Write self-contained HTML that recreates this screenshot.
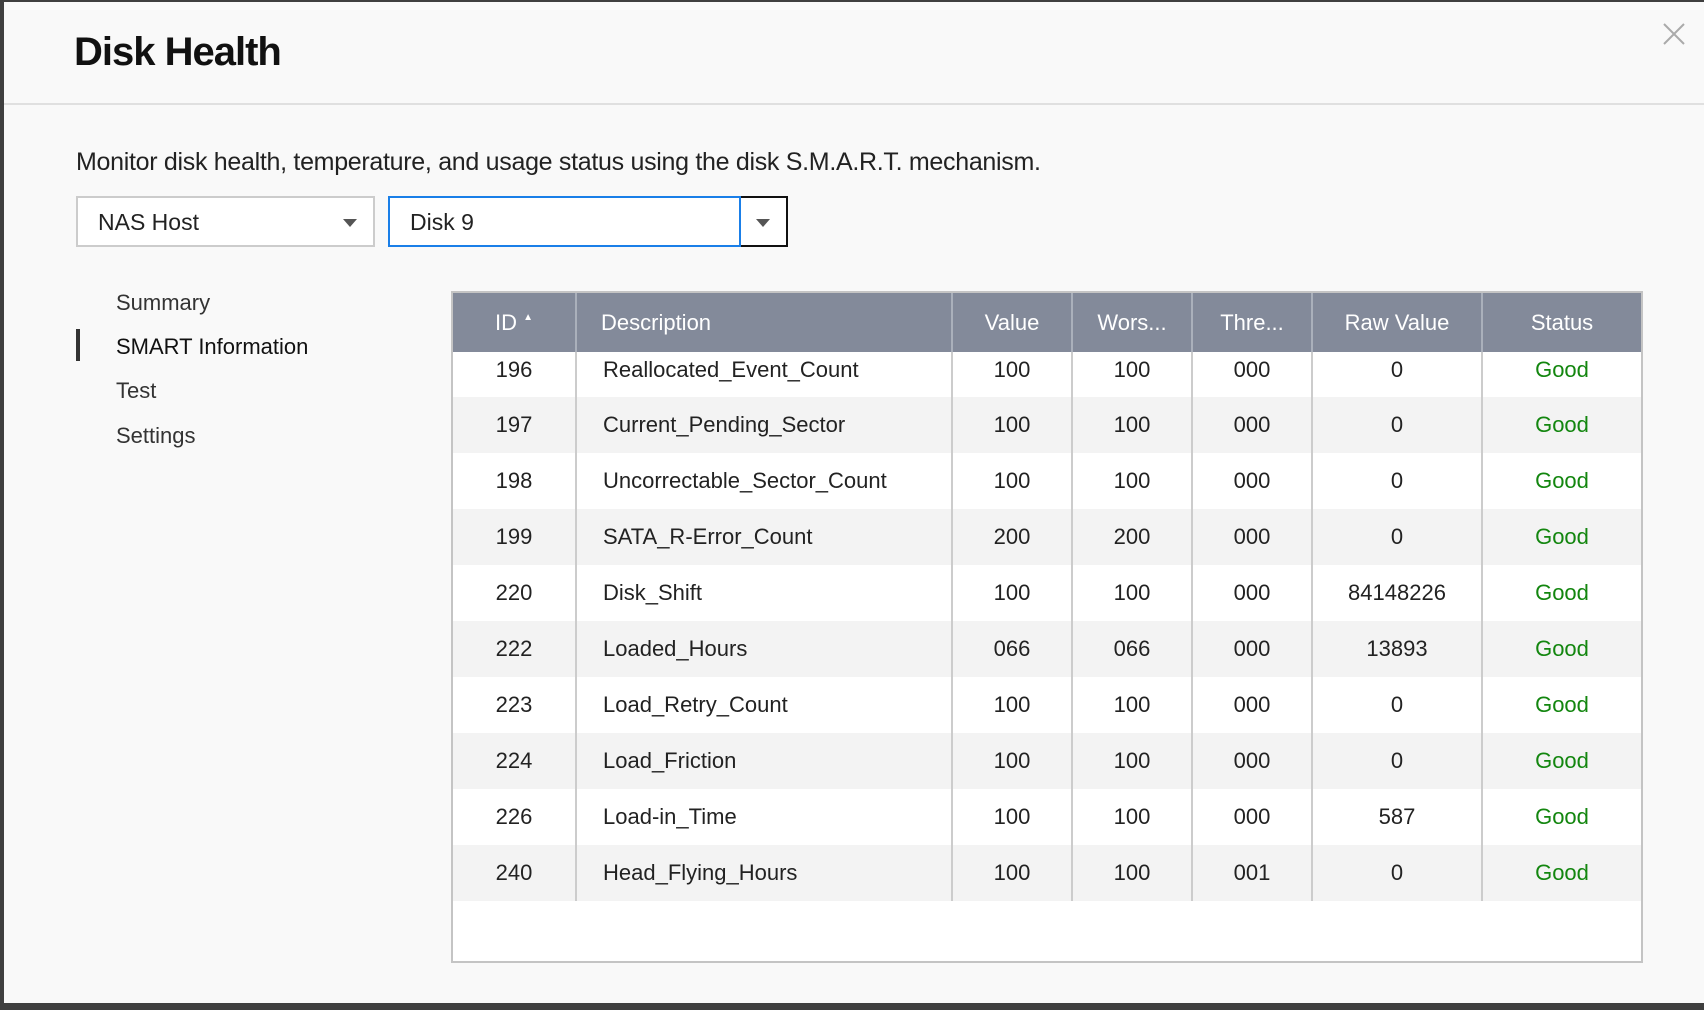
<!DOCTYPE html>
<html><head><meta charset="utf-8"><style>
*{box-sizing:border-box;margin:0;padding:0}
body{width:1704px;height:1010px;background:#3f3f3f;position:relative;overflow:hidden;font-family:"Liberation Sans",sans-serif;color:#222}
.dlg{position:absolute;left:4px;top:2px;width:1700px;height:1001px;background:#f9f9f9}
.title{position:absolute;left:70px;top:28px;font-size:40px;font-weight:bold;color:#111;letter-spacing:-1px}
.hr{position:absolute;left:0;right:0;top:101px;height:2px;background:#e0e0e0}
.x{position:absolute;left:1658px;top:20px;width:24px;height:24px}
.desc{position:absolute;left:72px;top:146px;font-size:25px;color:#222;letter-spacing:-0.3px}
.sel{position:absolute;top:194px;height:51px;background:#fff;font-size:23px;line-height:49px;padding-left:20px}
.s1{left:72px;width:299px;border:2px solid #ccc}
.s2{left:384px;width:353px;border:2px solid #1a7fe8}
.s3{left:737px;top:194px;width:47px;border:2px solid #111;border-left:none}
.tri{position:absolute;width:0;height:0;border-left:7px solid transparent;border-right:7px solid transparent;border-top:8px solid #555}
.nav{position:absolute;left:112px;font-size:22px;color:#333}
.bar{position:absolute;left:72px;top:327px;width:4px;height:32px;background:#333}
.tbl{position:absolute;left:447px;top:289px;width:1192px;height:672px;background:#fff;border:2px solid #c4c4c4}
table{border-collapse:collapse;position:absolute;left:0;top:0;width:1188px;table-layout:fixed}
th{background:#838a9a;color:#fff;font-weight:normal;font-size:22px;height:59px;border-left:2px solid #aab0bb}
th:first-child{border-left:none}
td{font-size:22px;text-align:center;height:56px;border-left:2px solid #ccc;color:#222}
td:first-child{border-left:none}
tr.a td{background:#f3f3f3}
td.d{text-align:left;padding-left:26px}
td.g{color:#13860f}
tr.f td{height:45px;vertical-align:top;padding-top:5px}
</style></head><body>
<div class="dlg">
<div class="title">Disk Health</div>
<div class="hr"></div>
<svg class="x" viewBox="0 0 24 24"><path d="M2 2L22 22M22 2L2 22" stroke="#aaa" stroke-width="2" fill="none"/></svg>
<div class="desc">Monitor disk health, temperature, and usage status using the disk S.M.A.R.T. mechanism.</div>
<div class="sel s1">NAS Host<div class="tri" style="left:265px;top:21px"></div></div>
<div class="sel s2">Disk 9</div>
<div class="sel s3" style="padding:0"><div class="tri" style="left:15px;top:21px"></div></div>
<div class="nav" style="top:288px">Summary</div>
<div class="bar"></div>
<div class="nav" style="top:332px;color:#111">SMART Information</div>
<div class="nav" style="top:376px">Test</div>
<div class="nav" style="top:421px">Settings</div>
<div class="tbl"><table>
<colgroup><col style="width:123px"><col style="width:376px"><col style="width:120px"><col style="width:120px"><col style="width:120px"><col style="width:170px"><col style="width:159px"></colgroup>
<tr><th>ID <span style="font-size:10px;vertical-align:10px">&#9650;</span></th><th style="text-align:left;padding-left:24px">Description</th><th>Value</th><th>Wors...</th><th>Thre...</th><th>Raw Value</th><th>Status</th></tr>
<tr class="f"><td>196</td><td class="d">Reallocated_Event_Count</td><td>100</td><td>100</td><td>000</td><td>0</td><td class="g">Good</td></tr>
<tr class="a"><td>197</td><td class="d">Current_Pending_Sector</td><td>100</td><td>100</td><td>000</td><td>0</td><td class="g">Good</td></tr>
<tr><td>198</td><td class="d">Uncorrectable_Sector_Count</td><td>100</td><td>100</td><td>000</td><td>0</td><td class="g">Good</td></tr>
<tr class="a"><td>199</td><td class="d">SATA_R-Error_Count</td><td>200</td><td>200</td><td>000</td><td>0</td><td class="g">Good</td></tr>
<tr><td>220</td><td class="d">Disk_Shift</td><td>100</td><td>100</td><td>000</td><td>84148226</td><td class="g">Good</td></tr>
<tr class="a"><td>222</td><td class="d">Loaded_Hours</td><td>066</td><td>066</td><td>000</td><td>13893</td><td class="g">Good</td></tr>
<tr><td>223</td><td class="d">Load_Retry_Count</td><td>100</td><td>100</td><td>000</td><td>0</td><td class="g">Good</td></tr>
<tr class="a"><td>224</td><td class="d">Load_Friction</td><td>100</td><td>100</td><td>000</td><td>0</td><td class="g">Good</td></tr>
<tr><td>226</td><td class="d">Load-in_Time</td><td>100</td><td>100</td><td>000</td><td>587</td><td class="g">Good</td></tr>
<tr class="a"><td>240</td><td class="d">Head_Flying_Hours</td><td>100</td><td>100</td><td>001</td><td>0</td><td class="g">Good</td></tr>
</table></div>
</div>
</body></html>
